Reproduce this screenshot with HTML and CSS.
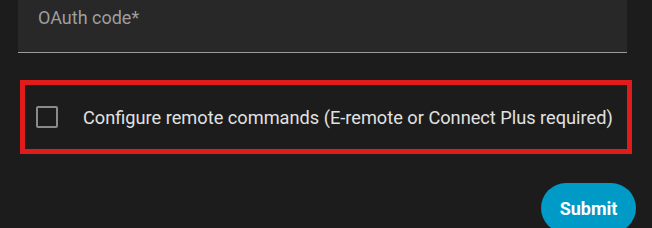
FILE: index.html
```html
<!DOCTYPE html>
<html lang="en">
<head>
<meta charset="UTF-8" />
<meta name="viewport" content="width=device-width, initial-scale=1" />
<title>OAuth</title>
<link rel="stylesheet" href="styles.css">
</head>
<body>
  <div class="form">
    <div class="text-field">
      <span class="field-label">OAuth code*</span>
    </div>
    <div class="highlight">
      <label class="check-row">
        <span class="check-box"></span>
        <span class="check-label">Configure remote commands (E-remote or Connect Plus required)</span>
      </label>
    </div>
    <div class="actions">
      <button type="button" class="submit-btn">Submit</button>
    </div>
  </div>
</body>
</html>
```

FILE: styles.css
```css
body {
  margin: 0;
  background: #1c1c1c;
  font-family: Roboto, 'Liberation Sans', Arial, sans-serif;
  overflow: hidden;
}
.form {
  display: flex;
  flex-direction: column;
}
.text-field {
  margin-left: 18px;
  width: 609px;
  height: 53px;
  box-sizing: border-box;
  padding-left: 20px;
  background: #282828;
  border-bottom: 1px solid #9a9a9a;
}
.field-label {
  display: block;
  padding-top: 7px;
  font-size: 18px;
  color: #9e9e9e;
}
.highlight {
  margin-top: 27px;
  margin-left: 20px;
  width: 612px;
  height: 74px;
  box-sizing: border-box;
  border: 5px solid #e01b1b;
  display: flex;
  align-items: center;
  padding-left: 11px;
}
.check-row {
  display: flex;
  align-items: center;
  gap: 25px;
  cursor: pointer;
}
.check-box {
  width: 22px;
  height: 22px;
  box-sizing: border-box;
  border: 2px solid #8a8a8a;
  border-radius: 2px;
}
.check-label {
  font-size: 18.2px;
  color: #e1e1e1;
}
.actions {
  display: flex;
  justify-content: flex-end;
  margin-top: 29px;
  padding-right: 16px;
}
.submit-btn {
  width: 95px;
  height: 50px;
  border: none;
  border-radius: 25px;
  background: #009ac7;
  color: #fff;
  font-family: inherit;
  font-size: 18px;
  font-weight: 700;
  padding: 0;
  cursor: pointer;
}
```
